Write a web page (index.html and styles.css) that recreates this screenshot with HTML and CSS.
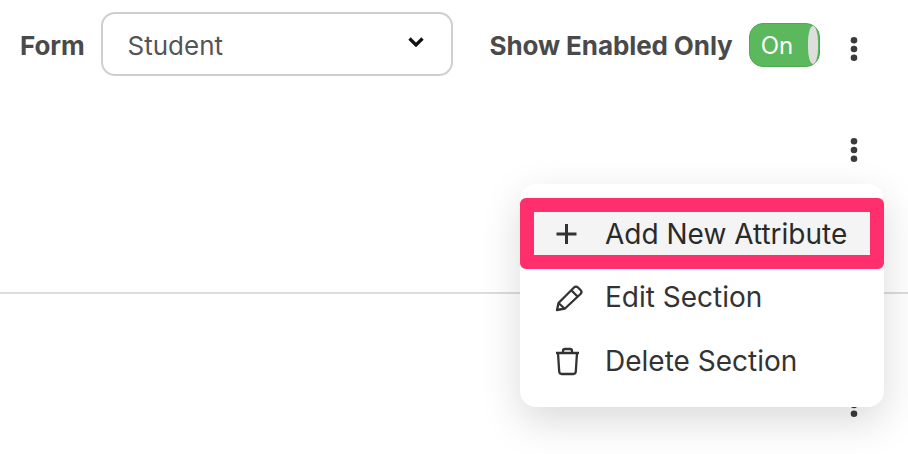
FILE: index.html
```html
<!DOCTYPE html>
<html lang="en">
<head>
<meta charset="utf-8">
<title>Form settings</title>
<link rel="stylesheet" href="styles.css">
</head>
<body>
<header class="toolbar">
  <span class="label">Form</span>
  <div class="select">
    <span>Student</span>
    <svg class="chevron" width="16" height="10" viewBox="0 0 16 10"><path d="M1.500 1.500 8 8l6.500-6.500" fill="none" stroke="#111" stroke-width="3.200"/></svg>
  </div>
  <span class="label enabled">Show Enabled Only</span>
  <div class="toggle"><span>On</span><i class="knob"></i></div>
  <svg class="kebab top-kebab" width="10" height="26" viewBox="0 0 10 26"><circle cx="5" cy="4.300" r="3.300"/><circle cx="5" cy="13" r="3.300"/><circle cx="5" cy="21.700" r="3.300"/></svg>
</header>
<div class="row-actions">
  <svg class="kebab" width="10" height="26" viewBox="0 0 10 26"><circle cx="5" cy="4.300" r="3.300"/><circle cx="5" cy="13" r="3.300"/><circle cx="5" cy="21.700" r="3.300"/></svg>
</div>
<hr class="divider">
<svg class="kebab lower-kebab" width="10" height="26" viewBox="0 0 10 26"><circle cx="5" cy="4.300" r="3.300"/><circle cx="5" cy="13" r="3.300"/><circle cx="5" cy="21.700" r="3.300"/></svg>
<div class="menu">
  <div class="item highlighted">
    <span class="slot"><svg width="26" height="26" viewBox="0 0 26 26"><path d="M12.500 3v20M2.500 13h20" fill="none" stroke="#333" stroke-width="3"/></svg></span>
    <span>Add New Attribute</span>
  </div>
  <div class="item">
    <span class="slot"><svg width="30" height="30" viewBox="0 0 30 30"><path d="M3 28l1.500-7L20 5.500c1.300-1.300 2.700-1.300 4 0l2.500 2.500c1.300 1.300 1.300 2.700 0 4L11 26.500zM17.500 8.500l6 6M4.500 21l6 5.500" fill="none" stroke="#333" stroke-width="2.300" stroke-linejoin="round"/></svg></span>
    <span>Edit Section</span>
  </div>
  <div class="item">
    <span class="slot"><svg width="26" height="30" viewBox="0 0 26 30"><path d="M2 7h23M9 7V5c0-1.200.8-2 2-2h5c1.200 0 2 .8 2 2v2M4 7l1.200 18.500c.1 1.500 1 2.500 2.500 2.500h11.600c1.500 0 2.400-1 2.500-2.500L23 7" fill="none" stroke="#333" stroke-width="2.300" stroke-linejoin="round"/></svg></span>
    <span>Delete Section</span>
  </div>
</div>
</body>
</html>
```

FILE: styles.css
```css
* {
  box-sizing: border-box;
}

html,
body {
  margin: 0;
  height: 100%;
  overflow: hidden;
}

body {
  position: relative;
  width: 908px;
  height: 454px;
  background: #fff;
  font-family: Inter, "Liberation Sans", sans-serif;
  color: #333;
}

.toolbar {
  display: flex;
  align-items: center;
  height: 64px;
  margin-top: 12px;
  padding-left: 20px;
}

.label {
  font-size: 26px;
  font-weight: 700;
  color: #4a4a4a;
  letter-spacing: -0.1px;
  padding-top: 3px;
}

.select {
  display: flex;
  align-items: center;
  justify-content: space-between;
  width: 352px;
  height: 64px;
  margin-left: 16px;
  padding: 3px 27px 0 25px;
  border: 2px solid #cfcfcf;
  border-radius: 14px;
  font-size: 26px;
  color: #555;
}

.chevron {
  margin-bottom: 7px;
}

.enabled {
  margin-left: 37px;
}

.toggle {
  display: flex;
  align-items: center;
  justify-content: space-between;
  width: 71px;
  height: 44px;
  margin-left: 16px;
  margin-top: 2px;
  padding: 0 1px 0 11px;
  border: 1px solid #4fa94f;
  border-radius: 14px;
  background: #5cb85c;
  color: #fff;
  font-size: 24px;
}

.knob {
  width: 10px;
  height: 38px;
  border-radius: 6px / 19px;
  background: #dedede;
}

.kebab {
  display: block;
  fill: #3b3b3b;
}

.top-kebab {
  flex: none;
  margin-left: 29px;
  margin-top: 10px;
}

.row-actions {
  display: flex;
  justify-content: flex-end;
  padding-right: 49px;
  margin-top: 61px;
}

.divider {
  margin: 129px 0 0;
  border: 0;
  border-top: 2px solid #dcdcdc;
}

.lower-kebab {
  position: absolute;
  left: 849px;
  top: 392px;
}

.menu {
  position: absolute;
  left: 520px;
  top: 184px;
  width: 364px;
  height: 223px;
  padding-top: 14px;
  border-radius: 16px;
  background: #fff;
  box-shadow: 0 14px 40px rgba(0, 0, 0, 0.15);
}

.item {
  display: flex;
  align-items: center;
  height: 64px;
  padding-left: 34px;
  font-size: 28px;
  color: #333;
}

.slot {
  display: flex;
  flex: none;
  width: 51px;
  margin-left: 0;
}

.item .slot + span {
  letter-spacing: 0;
}

.highlighted {
  height: 71px;
  margin-bottom: -4px;
  padding-left: 20px;
  border: 14px solid #ff2e6c;
  border-radius: 6px;
  background: #f4f4f4;
  color: #2a2a2a;
}
```
